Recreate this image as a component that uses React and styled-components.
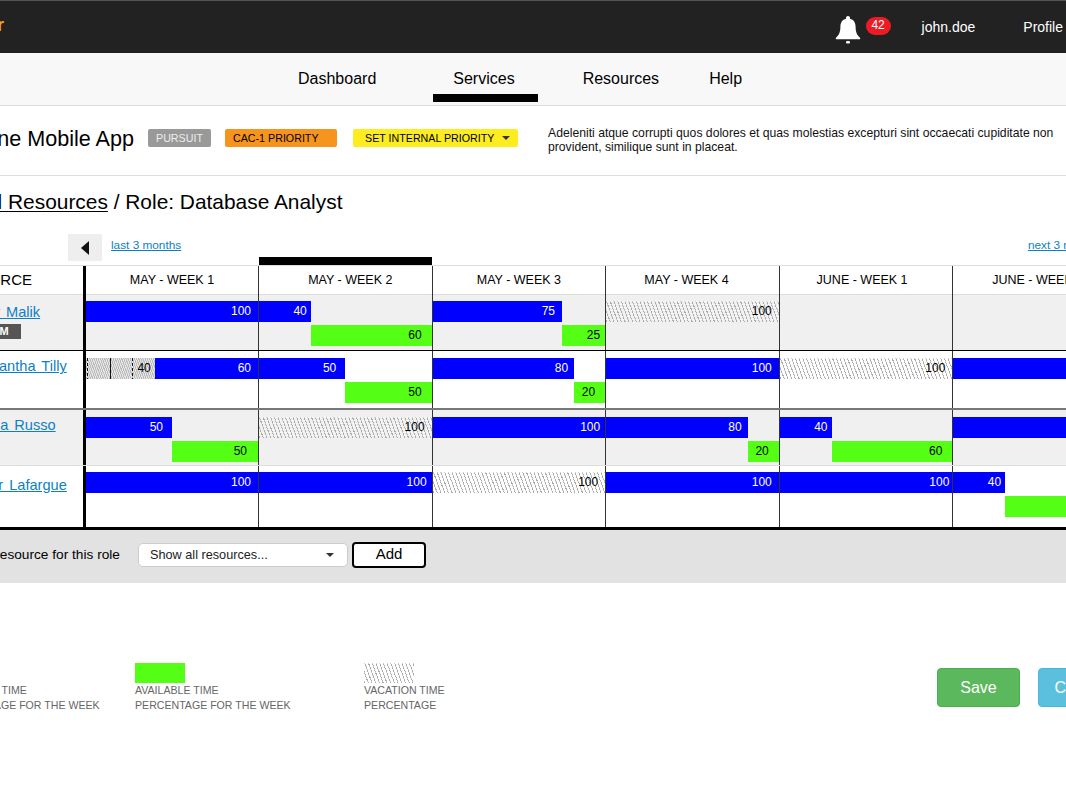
import React from "react";
import styled, { createGlobalStyle, css } from "styled-components";

const GlobalStyle = createGlobalStyle`
  html, body {
    margin: 0;
    padding: 0;
    height: 800px;
    overflow: hidden;
    background: #fff;
  }
  body {
    font-family: "Liberation Sans", Arial, Helvetica, sans-serif;
    color: #000;
  }
`;

// the shot is cropped on both sides, so the page is wider than the window
const Viewport = styled.div`
  width: 1066px;
  height: 800px;
  overflow: hidden;
`;

const Page = styled.div`
  width: 1320px;
  margin-left: -120px;
`;

const TopBar = styled.header`
  display: flex;
  align-items: center;
  height: 52px;
  box-sizing: content-box;
  border-top: 1px solid #555;
  background: #222;
  padding: 0 137px 0 0;
  color: #fff;
  font-size: 14px;
`;

const Logo = styled.div`
  width: 124px;
  text-align: right;
  color: #f7a01d;
  font-size: 18px;
  font-weight: 700;
  margin-top: -3px;
`;

const Bell = styled.svg`
  width: 26px;
  height: 28px;
  margin-left: auto;
  margin-top: 6px;
`;

const Count = styled.span`
  width: 25px;
  height: 18px;
  margin: -3px 0 0 5px;
  border-radius: 9px;
  background: #ed1c24;
  font-size: 12px;
  line-height: 17px;
  text-align: center;
`;

const UserLink = styled.span`
  margin-left: ${(p) => p.$gap}px;
`;

const Nav = styled.nav`
  display: flex;
  height: 52px;
  padding-left: 418px;
  background: #f8f8f8;
  border-bottom: 1px solid #ddd;
`;

const NavItem = styled.a`
  height: 41px;
  line-height: 52px;
  margin-left: ${(p) => p.$gap || 0}px;
  font-size: 16px;
  ${(p) =>
    p.$active &&
    css`
      padding: 0 23px 0 20px;
      border-bottom: 8px solid #000;
    `}
`;

const ProjectHeader = styled.section`
  display: flex;
  align-items: flex-start;
  height: 69px;
  border-bottom: 1px solid #ddd;
`;

const Title = styled.h1`
  flex: none;
  width: 254px;
  margin: 21px 0 0;
  font-size: 21.6px;
  font-weight: 400;
  line-height: 24px;
  text-align: right;
  white-space: nowrap;
`;

const Tag = styled.span`
  display: flex;
  align-items: center;
  justify-content: ${(p) => (p.$spread ? "space-between" : "flex-start")};
  flex: none;
  box-sizing: border-box;
  width: ${(p) => p.$width}px;
  height: 18px;
  margin: 23px 0 0 ${(p) => p.$gap}px;
  padding: ${(p) => (p.$spread ? "0 8px 0 12px" : "0 0 0 8px")};
  border-radius: 2px;
  background: ${(p) => p.$bg};
  color: ${(p) => p.$color || "#000"};
  font-size: 10.7px;
`;

const Caret = styled.i`
  width: 0;
  height: 0;
  border-left: ${(p) => p.$size || 4}px solid transparent;
  border-right: ${(p) => p.$size || 4}px solid transparent;
  border-top: ${(p) => p.$size || 4}px solid #333;
`;

const Description = styled.p`
  flex: none;
  width: 515px;
  margin: 20px 0 0 30px;
  font-size: 12.2px;
  line-height: 14px;
  color: #111;
`;

const Breadcrumb = styled.h2`
  margin: 14px 0 0;
  padding-left: 99px;
  font-size: 20.9px;
  font-weight: 400;
  line-height: 24px;

  u {
    text-underline-offset: 2px;
    text-decoration-thickness: 1px;
  }
`;

const Pager = styled.div`
  display: flex;
  align-items: flex-start;
  height: 27px;
  margin-top: 20px;
  padding: 0 98px 0 188px;
  font-size: 11.8px;
`;

const ArrowButton = styled.button`
  display: flex;
  align-items: center;
  justify-content: center;
  width: 34px;
  height: 27px;
  padding: 0;
  border: 0;
  background: #eee;

  &::before {
    content: "";
    border-top: 7px solid transparent;
    border-bottom: 7px solid transparent;
    border-right: 8px solid #111;
  }
`;

const PagerLink = styled.a`
  margin: 4px 0 0 ${(p) => (p.$next ? "auto" : "9px")};
  color: #0d7fc4;
  text-decoration: underline;
  line-height: 14px;
`;

const Schedule = styled.div`
  margin-top: 4px;
  border-top: 1px solid #ddd;
`;

const Row = styled.div`
  display: grid;
  grid-template-columns: 206px 172px repeat(6, 173.6px);
  height: ${(p) => p.$height}px;
  background: ${(p) => (p.$shaded ? "#f0f0f0" : "#fff")};
  border-bottom: ${(p) => p.$border};
`;

const ResourceCell = styled.div`
  box-sizing: border-box;
  padding: ${(p) => p.$top}px 0 0 ${(p) => p.$indent}px;
  border-right: 3px solid #000;
`;

const ResourceHead = styled.div`
  box-sizing: border-box;
  padding: 6px 0 0 67px;
  border-right: 3px solid #000;
  font-size: 15px;
  line-height: 16px;
`;

const ResourceName = styled.a`
  display: block;
  color: #0d7fc4;
  font-size: 14.6px;
  line-height: 16px;
  word-spacing: 2px;
  text-decoration: underline;
`;

const RoleBadge = styled.span`
  display: block;
  width: 41px;
  height: 15px;
  margin: 4px 0 0 10px;
  background: #555;
  color: #fff;
  font-size: 11px;
  font-weight: 700;
  line-height: 15px;
  text-align: center;
`;

const WeekHead = styled.div`
  position: relative;
  border-left: ${(p) => (p.$first ? "0" : "1px solid #333")};
  font-size: 12.5px;
  line-height: 29px;
  text-align: center;
  text-indent: ${(p) => p.$shift * 2}px;

  ${(p) =>
    p.$current &&
    css`
      &::before {
        content: "";
        position: absolute;
        top: -9px;
        left: 0;
        right: 0;
        height: 8px;
        background: #000;
      }
    `}
`;

const WeekCell = styled.div`
  display: flex;
  flex-direction: column;
  gap: 3px;
  padding-top: ${(p) => p.$top}px;
  border-left: ${(p) => (p.$first ? "0" : "1px solid #333")};
  min-width: 0;
`;

const Lane = styled.div`
  display: flex;
  justify-content: ${(p) => (p.$end ? "flex-end" : "flex-start")};
  height: 21px;
`;

const hatch = css`
  background-color: transparent;
  background-image: linear-gradient(rgba(255, 255, 255, 0.45) 1px, transparent 1px),
    repeating-linear-gradient(70deg, #aaa 0, #aaa 1px, transparent 1px, transparent 3.5px);
  background-size: 100% 3px, auto;
`;

const denseHatch = css`
  background-color: #e6e6e6;
  background-image: repeating-linear-gradient(#111 0, #111 3px, transparent 3px, transparent 5px),
    linear-gradient(#111, #111),
    repeating-linear-gradient(#111 0, #111 3px, transparent 3px, transparent 5px),
    repeating-linear-gradient(70deg, #bbb 0, #bbb 1px, transparent 1px, transparent 2px);
  background-repeat: no-repeat, no-repeat, no-repeat, repeat;
  background-position: 1px 0, 24px 0, 46px 0, 0 0;
  background-size: 1px 100%, 1px 100%, 1px 100%, auto;
`;

const Bar = styled.div`
  flex: none;
  box-sizing: border-box;
  width: ${(p) => p.$width}%;
  padding-right: ${(p) => p.$pad}px;
  font-size: 12px;
  line-height: 21px;
  text-align: right;
  color: ${(p) => (p.$kind === "work" ? "#fff" : "#000")};
  ${(p) => p.$kind === "work" && "background: #0000ff;"}
  ${(p) => p.$kind === "free" && "background: #55ff15;"}
  ${(p) => p.$kind === "off" && hatch}
  ${(p) => p.$kind === "offDense" && denseHatch}
`;

const AddBar = styled.div`
  display: flex;
  align-items: center;
  height: 53px;
  background: #e2e2e2;
  font-size: 13.7px;
`;

const AddLabel = styled.span`
  flex: none;
  width: 240px;
  text-align: right;
  white-space: nowrap;
  margin-top: -5px;
`;

const ResourceSelect = styled.div`
  display: flex;
  align-items: center;
  justify-content: space-between;
  box-sizing: border-box;
  width: 210px;
  height: 24px;
  margin: -4px 0 0 18px;
  padding: 0 13px 0 11px;
  border: 1px solid #ccc;
  border-radius: 5px;
  background: #fff;
  font-size: 12.7px;
  color: #222;
`;

const AddButton = styled.button`
  box-sizing: border-box;
  width: 74px;
  height: 26px;
  margin: -4px 0 0 4px;
  padding: 0 0 2px;
  border: 2px solid #000;
  border-radius: 4px;
  background: #fff;
  color: #000;
  font-family: inherit;
  font-size: 15px;
`;

const Footer = styled.footer`
  display: flex;
  align-items: flex-start;
  margin-top: 80px;
  padding: 0 79px 0 64px;
`;

const LegendItem = styled.div`
  flex: none;
  width: ${(p) => p.$width}px;
  font-size: 10.6px;
  line-height: 15px;
  color: #666;
`;

const Swatch = styled.div`
  width: 50px;
  height: 20px;
  ${(p) => p.$kind === "work" && "background: #0000ff;"}
  ${(p) => p.$kind === "free" && "background: #55ff15;"}
  ${(p) => p.$kind === "off" && hatch}
`;

const Action = styled.button`
  box-sizing: border-box;
  width: 83px;
  height: 39px;
  margin: 5px 0 0 ${(p) => p.$gap};
  padding: 0;
  border: 1px solid ${(p) => p.$edge};
  border-radius: 4px;
  background: ${(p) => p.$bg};
  color: #fff;
  font-family: inherit;
  font-size: 16px;
`;

const weeks = [
  { label: "MAY - WEEK 1", shift: 0 },
  { label: "MAY - WEEK 2", shift: 5 },
  { label: "MAY - WEEK 3", shift: 0 },
  { label: "MAY - WEEK 4", shift: -6 },
  { label: "JUNE - WEEK 1", shift: -4 },
  { label: "JUNE - WEEK 2", shift: -2 },
];

const defaultPad = { work: 7, free: 10, off: 7, offDense: 4 };

// each bar: kind, number shown, width in percent of the week, label padding
const resources = [
  {
    name: "Amir Malik",
    badge: "PM",
    height: 55,
    top: 9,
    indent: 90,
    barTop: 6,
    shaded: true,
    border: "1px solid #000",
    cells: [
      [["work", 100]],
      [["work", 40, 30, 4], ["free", 60, 70]],
      [["work", 75], ["free", 25, 25, 5]],
      [["off", 100]],
      [],
      [],
    ],
  },
  {
    name: "Samantha Tilly",
    height: 57,
    top: 7,
    indent: 89,
    barTop: 7,
    border: "2px solid #777",
    cells: [
      [["offDense", 40], ["work", 60]],
      [["work", 50, 50, 9], ["free", 50]],
      [["work", 80, 82, 6], ["free", 20, 18]],
      [["work", 100]],
      [["off", 100]],
      [["work", 100]],
    ],
  },
  {
    name: "Regina Russo",
    height: 55,
    top: 7,
    indent: 82,
    barTop: 7,
    shaded: true,
    border: "1px solid #ddd",
    cells: [
      [["work", 50, 50, 9], ["free", 50, 50, 11]],
      [["off", 100]],
      [["work", 100, 100, 5]],
      [["work", 80, 82, 6], ["free", 20, 18]],
      [["work", 40, 30, 4], ["free", 60, 70]],
      [["work", 100]],
    ],
  },
  {
    name: "Oliver Lafargue",
    height: 61,
    top: 11,
    indent: 85,
    barTop: 6,
    border: "3px solid #000",
    cells: [
      [["work", 100]],
      [["work", 100, 100, 5]],
      [["off", 100]],
      [["work", 100]],
      [["work", 100, 100, 3]],
      [["work", 40, 30, 4], ["free", 60, 70]],
    ],
  },
];

const renderBar = ([kind, value, width, pad], i) => (
  <Bar key={i} $kind={kind} $width={width || value} $pad={pad ?? defaultPad[kind]}>
    {value}
  </Bar>
);

const ScheduleBars = ({ bars }) => (
  <>
    <Lane>{bars.filter(([kind]) => kind !== "free").map(renderBar)}</Lane>
    <Lane $end>{bars.filter(([kind]) => kind === "free").map(renderBar)}</Lane>
  </>
);

export default function App() {
  return (
    <Viewport>
      <GlobalStyle />
      <Page>
        <TopBar>
          <Logo>Planner</Logo>
          <Bell viewBox="0 0 26 28" aria-hidden="true">
            <path
              fill="#fff"
              d="M13 0c1.200 0 2 .8 2 2v.7c3.700.9 5.600 4 5.600 8 0 5.600 1.600 8.700 4.400 11 .5.500.2 1.600-.6 1.600H1.600c-.8 0-1.100-1.100-.6-1.600 2.800-2.300 4.400-5.400 4.400-11 0-4 1.900-7.100 5.600-8V2c0-1.200.8-2 2-2z"
            />
            <rect x="11" y="25" width="4" height="2.500" rx="1.200" fill="#fff" />
          </Bell>
          <Count>42</Count>
          <UserLink $gap={31}>john.doe</UserLink>
          <UserLink $gap={48}>Profile</UserLink>
        </TopBar>

        <Nav>
          <NavItem>Dashboard</NavItem>
          <NavItem $active $gap={57}>Services</NavItem>
          <NavItem $gap={45}>Resources</NavItem>
          <NavItem $gap={50}>Help</NavItem>
        </Nav>

        <ProjectHeader>
          <Title>Online Mobile App</Title>
          <Tag $width={63} $gap={14} $bg="#999" $color="#eee">PURSUIT</Tag>
          <Tag $width={112} $gap={14} $bg="#f7941d">CAC-1 PRIORITY</Tag>
          <Tag $width={165} $gap={16} $bg="#fdec1f" $spread>
            SET INTERNAL PRIORITY
            <Caret />
          </Tag>
          <Description>
            Adeleniti atque corrupti quos dolores et quas molestias excepturi sint occaecati cupiditate non
            provident, similique sunt in placeat.
          </Description>
        </ProjectHeader>

        <Breadcrumb>
          <u>All Resources</u> / Role: Database Analyst
        </Breadcrumb>

        <Pager>
          <ArrowButton aria-label="Previous" />
          <PagerLink>last 3 months</PagerLink>
          <PagerLink $next>next 3 months</PagerLink>
        </Pager>

        <Schedule>
          <Row $height={28} $border="1px solid #ddd">
            <ResourceHead>RESOURCE</ResourceHead>
            {weeks.map((week, i) => (
              <WeekHead key={week.label} $first={i === 0} $current={i === 1} $shift={week.shift}>
                {week.label}
              </WeekHead>
            ))}
          </Row>
          {resources.map((r) => (
            <Row key={r.name} $height={r.height} $shaded={r.shaded} $border={r.border}>
              <ResourceCell $top={r.top} $indent={r.indent}>
                <ResourceName>{r.name}</ResourceName>
                {r.badge && <RoleBadge>{r.badge}</RoleBadge>}
              </ResourceCell>
              {r.cells.map((bars, i) => (
                <WeekCell key={i} $first={i === 0} $top={r.barTop}>
                  <ScheduleBars bars={bars} />
                </WeekCell>
              ))}
            </Row>
          ))}
        </Schedule>

        <AddBar>
          <AddLabel>Add a resource for this role</AddLabel>
          <ResourceSelect>
            Show all resources...
            <Caret $size={4.5} />
          </ResourceSelect>
          <AddButton>Add</AddButton>
        </AddBar>

        <Footer>
          <LegendItem $width={191}>
            <Swatch $kind="work" />
            ASSIGNED TIME
            <br />
            PERCENTAGE FOR THE WEEK
          </LegendItem>
          <LegendItem $width={229}>
            <Swatch $kind="free" />
            AVAILABLE TIME
            <br />
            PERCENTAGE FOR THE WEEK
          </LegendItem>
          <LegendItem $width={200}>
            <Swatch $kind="off" />
            VACATION TIME
            <br />
            PERCENTAGE
          </LegendItem>
          <Action $gap="auto" $bg="#5cb85c" $edge="#4cae4c">Save</Action>
          <Action $gap="18px" $bg="#5bc0de" $edge="#46b8da">Cancel</Action>
        </Footer>
      </Page>
    </Viewport>
  );
}
